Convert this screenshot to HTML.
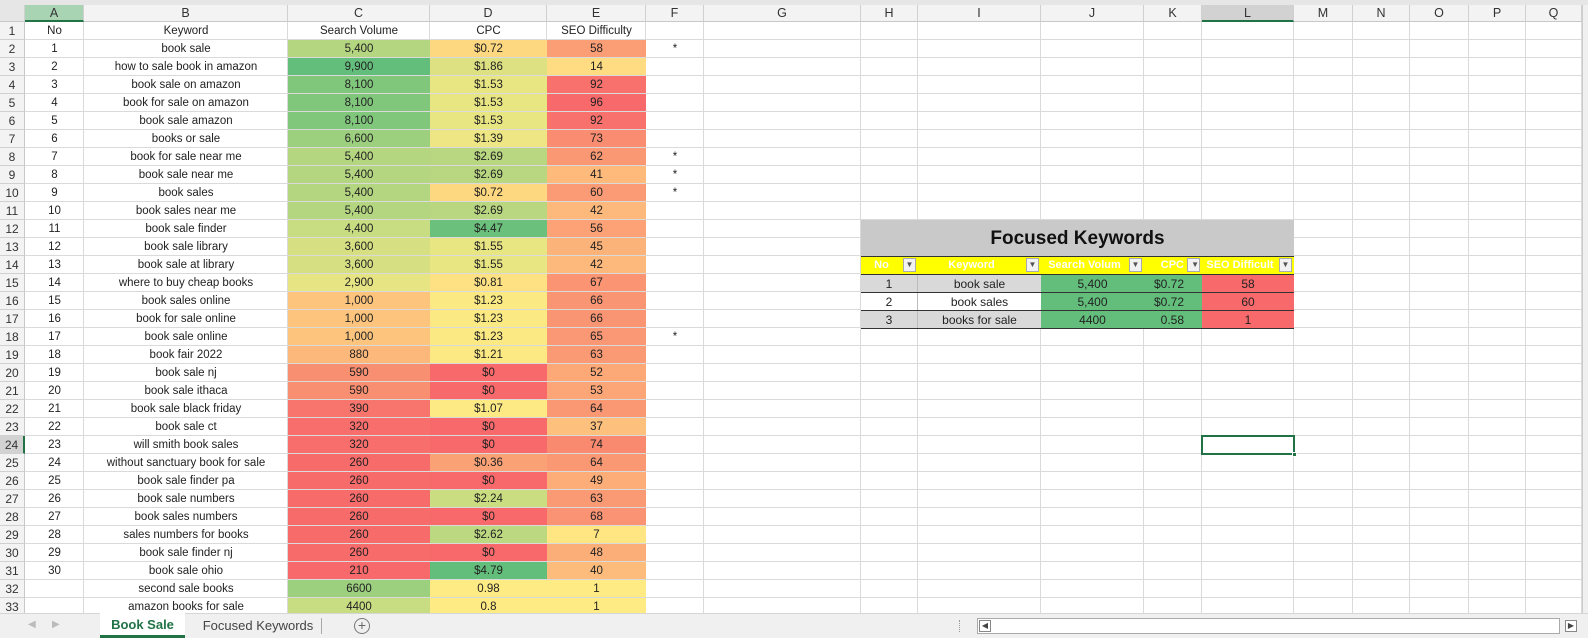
<!DOCTYPE html>
<html><head><meta charset="utf-8"><style>
*{box-sizing:border-box;margin:0;padding:0}
body{width:1588px;height:638px;overflow:hidden;background:#fff;font-family:"Liberation Sans",Arial,sans-serif;font-size:11.5px;color:#222;position:relative}
.top{position:absolute;left:0;top:0;width:1588px;height:5px;background:#e6e6e6}
.hdr{position:absolute;top:5px;height:17px;background:#f3f3f3;border-right:1px solid #d0d0d0;border-bottom:1px solid #c8c8c8;text-align:center;line-height:16px;font-size:12.5px;color:#333}
.vl{position:absolute;top:22px;height:592px;width:1px;background:#dadada}
.grid{position:absolute;left:25px;top:22px;width:1557px;height:592px;background:repeating-linear-gradient(to bottom,transparent 0,transparent 17px,#dadada 17px,#dadada 18px)}
.rn{position:absolute;left:0;width:25px;height:18px;background:#f3f3f3;border-bottom:1px solid #d0d0d0;border-right:1px solid #c8c8c8;font-size:12px;line-height:19px;text-align:center;color:#333}
.r{position:absolute;left:25px;height:18px;display:flex}
.r div{height:17px;line-height:19px;text-align:center;white-space:nowrap;overflow:hidden}
.a{width:59px}.b{width:204px}.c{width:142px}.d{width:117px}.e{width:99px}.f{width:58px}
.ft{position:absolute;left:861px;width:433px}
.tabs{position:absolute;left:0;top:613px;width:1588px;height:25px;background:#f0f0f0;border-top:1px solid #d6d6d6}
</style></head><body>
<div class="top"></div>
<div class="hdr" style="left:0;width:25px;background:#e6e6e6"></div>
<div class="hdr" style="left:25px;width:59px;background:#a9d4b4;border-bottom:2px solid #217346">A</div>
<div class="hdr" style="left:84px;width:204px">B</div>
<div class="hdr" style="left:288px;width:142px">C</div>
<div class="hdr" style="left:430px;width:117px">D</div>
<div class="hdr" style="left:547px;width:99px">E</div>
<div class="hdr" style="left:646px;width:58px">F</div>
<div class="hdr" style="left:704px;width:157px">G</div>
<div class="hdr" style="left:861px;width:57px">H</div>
<div class="hdr" style="left:918px;width:123px">I</div>
<div class="hdr" style="left:1041px;width:103px">J</div>
<div class="hdr" style="left:1144px;width:58px">K</div>
<div class="hdr" style="left:1202px;width:92px;background:#d2d2d2;border-bottom:2px solid #217346">L</div>
<div class="hdr" style="left:1294px;width:59px">M</div>
<div class="hdr" style="left:1353px;width:57px">N</div>
<div class="hdr" style="left:1410px;width:59px">O</div>
<div class="hdr" style="left:1469px;width:57px">P</div>
<div class="hdr" style="left:1526px;width:56px">Q</div>
<div style="position:absolute;left:1582px;top:5px;width:6px;height:608px;background:#f0f0f0;border-left:1px solid #ccc"></div>
<div class="grid"></div>
<div class="vl" style="left:83px"></div><div class="vl" style="left:287px"></div><div class="vl" style="left:429px"></div><div class="vl" style="left:546px"></div><div class="vl" style="left:645px"></div><div class="vl" style="left:703px"></div><div class="vl" style="left:860px"></div><div class="vl" style="left:917px"></div><div class="vl" style="left:1040px"></div><div class="vl" style="left:1143px"></div><div class="vl" style="left:1201px"></div><div class="vl" style="left:1293px"></div><div class="vl" style="left:1352px"></div><div class="vl" style="left:1409px"></div><div class="vl" style="left:1468px"></div><div class="vl" style="left:1525px"></div><div class="vl" style="left:1581px"></div>

<div class="rn" style="top:22px">1</div><div class="rn" style="top:40px">2</div><div class="rn" style="top:58px">3</div><div class="rn" style="top:76px">4</div><div class="rn" style="top:94px">5</div><div class="rn" style="top:112px">6</div><div class="rn" style="top:130px">7</div><div class="rn" style="top:148px">8</div><div class="rn" style="top:166px">9</div><div class="rn" style="top:184px">10</div><div class="rn" style="top:202px">11</div><div class="rn" style="top:220px">12</div><div class="rn" style="top:238px">13</div><div class="rn" style="top:256px">14</div><div class="rn" style="top:274px">15</div><div class="rn" style="top:292px">16</div><div class="rn" style="top:310px">17</div><div class="rn" style="top:328px">18</div><div class="rn" style="top:346px">19</div><div class="rn" style="top:364px">20</div><div class="rn" style="top:382px">21</div><div class="rn" style="top:400px">22</div><div class="rn" style="top:418px">23</div><div class="rn" style="top:436px;background:#d2d2d2;border-right:2px solid #217346">24</div><div class="rn" style="top:454px">25</div><div class="rn" style="top:472px">26</div><div class="rn" style="top:490px">27</div><div class="rn" style="top:508px">28</div><div class="rn" style="top:526px">29</div><div class="rn" style="top:544px">30</div><div class="rn" style="top:562px">31</div><div class="rn" style="top:580px">32</div><div class="rn" style="top:598px">33</div>

<div class="r" style="top:22px"><div class="a">No</div><div class="b">Keyword</div><div class="c">Search Volume</div><div class="d">CPC</div><div class="e">SEO Difficulty</div></div>
<div class="r" style="top:40px"><div class="a">1</div><div class="b">book sale</div><div class="c" style="background:#b5d680">5,400</div><div class="d" style="background:#fed880">$0.72</div><div class="e" style="background:#fb9d75">58</div><div class="f">*</div></div>
<div class="r" style="top:58px"><div class="a">2</div><div class="b">how to sale book in amazon</div><div class="c" style="background:#63be7b">9,900</div><div class="d" style="background:#dde182">$1.86</div><div class="e" style="background:#ffdb81">14</div></div>
<div class="r" style="top:76px"><div class="a">3</div><div class="b">book sale on amazon</div><div class="c" style="background:#80c77c">8,100</div><div class="d" style="background:#e8e583">$1.53</div><div class="e" style="background:#f8716c">92</div></div>
<div class="r" style="top:94px"><div class="a">4</div><div class="b">book for sale on amazon</div><div class="c" style="background:#80c77c">8,100</div><div class="d" style="background:#e8e583">$1.53</div><div class="e" style="background:#f8696b">96</div></div>
<div class="r" style="top:112px"><div class="a">5</div><div class="b">book sale amazon</div><div class="c" style="background:#80c77c">8,100</div><div class="d" style="background:#e8e583">$1.53</div><div class="e" style="background:#f8716c">92</div></div>
<div class="r" style="top:130px"><div class="a">6</div><div class="b">books or sale</div><div class="c" style="background:#9ccf7e">6,600</div><div class="d" style="background:#eee684">$1.39</div><div class="e" style="background:#fa8c71">73</div></div>
<div class="r" style="top:148px"><div class="a">7</div><div class="b">book for sale near me</div><div class="c" style="background:#b5d680">5,400</div><div class="d" style="background:#b9d780">$2.69</div><div class="e" style="background:#fa9874">62</div><div class="f">*</div></div>
<div class="r" style="top:166px"><div class="a">8</div><div class="b">book sale near me</div><div class="c" style="background:#b5d680">5,400</div><div class="d" style="background:#b9d780">$2.69</div><div class="e" style="background:#fdba7b">41</div><div class="f">*</div></div>
<div class="r" style="top:184px"><div class="a">9</div><div class="b">book sales</div><div class="c" style="background:#b5d680">5,400</div><div class="d" style="background:#fed880">$0.72</div><div class="e" style="background:#fb9b75">60</div><div class="f">*</div></div>
<div class="r" style="top:202px"><div class="a">10</div><div class="b">book sales near me</div><div class="c" style="background:#b5d680">5,400</div><div class="d" style="background:#b9d780">$2.69</div><div class="e" style="background:#fdb87b">42</div></div>
<div class="r" style="top:220px"><div class="a">11</div><div class="b">book sale finder</div><div class="c" style="background:#c8dc81">4,400</div><div class="d" style="background:#6bc07b">$4.47</div><div class="e" style="background:#fca276">56</div></div>
<div class="r" style="top:238px"><div class="a">12</div><div class="b">book sale library</div><div class="c" style="background:#d6e082">3,600</div><div class="d" style="background:#e8e583">$1.55</div><div class="e" style="background:#fcb379">45</div></div>
<div class="r" style="top:256px"><div class="a">13</div><div class="b">book sale at library</div><div class="c" style="background:#d6e082">3,600</div><div class="d" style="background:#e8e583">$1.55</div><div class="e" style="background:#fdb87b">42</div></div>
<div class="r" style="top:274px"><div class="a">14</div><div class="b">where to buy cheap books</div><div class="c" style="background:#e6e483">2,900</div><div class="d" style="background:#fee182">$0.81</div><div class="e" style="background:#fa9473">67</div></div>
<div class="r" style="top:292px"><div class="a">15</div><div class="b">book sales online</div><div class="c" style="background:#fdc47d">1,000</div><div class="d" style="background:#fbe983">$1.23</div><div class="e" style="background:#fa9573">66</div></div>
<div class="r" style="top:310px"><div class="a">16</div><div class="b">book for sale online</div><div class="c" style="background:#fdc47d">1,000</div><div class="d" style="background:#fbe983">$1.23</div><div class="e" style="background:#fa9573">66</div></div>
<div class="r" style="top:328px"><div class="a">17</div><div class="b">book sale online</div><div class="c" style="background:#fdc47d">1,000</div><div class="d" style="background:#fbe983">$1.23</div><div class="e" style="background:#fa9774">65</div><div class="f">*</div></div>
<div class="r" style="top:346px"><div class="a">18</div><div class="b">book fair 2022</div><div class="c" style="background:#fcb77a">880</div><div class="d" style="background:#fce983">$1.21</div><div class="e" style="background:#fa9a74">63</div></div>
<div class="r" style="top:364px"><div class="a">19</div><div class="b">book sale nj</div><div class="c" style="background:#f98f71">590</div><div class="d" style="background:#f8696b">$0</div><div class="e" style="background:#fca877">52</div></div>
<div class="r" style="top:382px"><div class="a">20</div><div class="b">book sale ithaca</div><div class="c" style="background:#f98f71">590</div><div class="d" style="background:#f8696b">$0</div><div class="e" style="background:#fca677">53</div></div>
<div class="r" style="top:400px"><div class="a">21</div><div class="b">book sale black friday</div><div class="c" style="background:#f8756d">390</div><div class="d" style="background:#feea84">$1.07</div><div class="e" style="background:#fa9874">64</div></div>
<div class="r" style="top:418px"><div class="a">22</div><div class="b">book sale ct</div><div class="c" style="background:#f86e6c">320</div><div class="d" style="background:#f8696b">$0</div><div class="e" style="background:#fdc07d">37</div></div>
<div class="r" style="top:436px"><div class="a">23</div><div class="b">will smith book sales</div><div class="c" style="background:#f86e6c">320</div><div class="d" style="background:#f8696b">$0</div><div class="e" style="background:#f98a70">74</div></div>
<div class="r" style="top:454px"><div class="a">24</div><div class="b">without sanctuary book for sale</div><div class="c" style="background:#f86b6b">260</div><div class="d" style="background:#fba176">$0.36</div><div class="e" style="background:#fa9874">64</div></div>
<div class="r" style="top:472px"><div class="a">25</div><div class="b">book sale finder pa</div><div class="c" style="background:#f86b6b">260</div><div class="d" style="background:#f8696b">$0</div><div class="e" style="background:#fcad78">49</div></div>
<div class="r" style="top:490px"><div class="a">26</div><div class="b">book sale numbers</div><div class="c" style="background:#f86b6b">260</div><div class="d" style="background:#cbdd81">$2.24</div><div class="e" style="background:#fa9a74">63</div></div>
<div class="r" style="top:508px"><div class="a">27</div><div class="b">book sales numbers</div><div class="c" style="background:#f86b6b">260</div><div class="d" style="background:#f8696b">$0</div><div class="e" style="background:#fa9373">68</div></div>
<div class="r" style="top:526px"><div class="a">28</div><div class="b">sales numbers for books</div><div class="c" style="background:#f86b6b">260</div><div class="d" style="background:#bcd880">$2.62</div><div class="e" style="background:#ffe683">7</div></div>
<div class="r" style="top:544px"><div class="a">29</div><div class="b">book sale finder nj</div><div class="c" style="background:#f86b6b">260</div><div class="d" style="background:#f8696b">$0</div><div class="e" style="background:#fcae78">48</div></div>
<div class="r" style="top:562px"><div class="a">30</div><div class="b">book sale ohio</div><div class="c" style="background:#f8696b">210</div><div class="d" style="background:#63be7b">$4.79</div><div class="e" style="background:#fdbc7c">40</div></div>
<div class="r" style="top:580px"><div class="a"></div><div class="b">second sale books</div><div class="c" style="background:#9ccf7e">6600</div><div class="d" style="background:#ffeb84">0.98</div><div class="e" style="background:#ffeb84">1</div></div>
<div class="r" style="top:598px"><div class="a"></div><div class="b">amazon books for sale</div><div class="c" style="background:#c8dc81">4400</div><div class="d" style="background:#ffeb84">0.8</div><div class="e" style="background:#ffeb84">1</div></div>

<div class="ft" style="top:220px;height:37px;background:#c9c9c9;text-align:center;font-weight:bold;font-size:19px;line-height:38px;color:#111;border-bottom:1px solid #333">Focused Keywords</div>
<div class="ft" style="top:257px;height:18px;background:#ffff00;display:flex;color:#fff;font-weight:bold;font-size:11px;line-height:17px;border-bottom:1px solid #333">
<div style="width:57px;position:relative;text-align:center;padding-right:16px">No<span style="position:absolute;right:2px;top:1px;width:13px;height:14px;background:#f2f2f2;border:1px solid #aaa;color:#555;font-size:8px;line-height:12px">▼</span></div>
<div style="width:123px;position:relative;text-align:center;padding-right:16px">Keyword<span style="position:absolute;right:2px;top:1px;width:13px;height:14px;background:#f2f2f2;border:1px solid #aaa;color:#555;font-size:8px;line-height:12px">▼</span></div>
<div style="width:103px;position:relative;text-align:center;padding-right:16px;overflow:hidden;white-space:nowrap">Search Volum<span style="position:absolute;right:2px;top:1px;width:13px;height:14px;background:#f2f2f2;border:1px solid #aaa;color:#555;font-size:8px;line-height:12px">▼</span></div>
<div style="width:58px;position:relative;text-align:right;padding-right:18px">CPC<span style="position:absolute;right:2px;top:1px;width:13px;height:14px;background:#f2f2f2;border:1px solid #aaa;color:#555;font-size:8px;line-height:12px">▼</span></div>
<div style="width:92px;position:relative;text-align:center;padding-right:16px;overflow:hidden;white-space:nowrap">SEO Difficult<span style="position:absolute;right:2px;top:1px;width:13px;height:14px;background:#f2f2f2;border:1px solid #aaa;color:#555;font-size:8px;line-height:12px">▼</span></div>
</div>
<div class="ft" style="top:275px;height:18px;display:flex;line-height:18px;border-bottom:1px solid #333;font-size:12px">
<div style="width:57px;background:#d9d9d9;text-align:center;border-right:1px solid #bbb">1</div><div style="width:123px;background:#d9d9d9;text-align:center">book sale</div><div style="width:103px;background:#63be7b;text-align:center">5,400</div><div style="width:58px;background:#63be7b;text-align:right;padding-right:18px">$0.72</div><div style="width:92px;background:#f8696b;text-align:center">58</div></div>
<div class="ft" style="top:293px;height:18px;display:flex;line-height:18px;border-bottom:1px solid #333;font-size:12px">
<div style="width:57px;background:#fff;text-align:center;border-right:1px solid #bbb">2</div><div style="width:123px;background:#fff;text-align:center">book sales</div><div style="width:103px;background:#63be7b;text-align:center">5,400</div><div style="width:58px;background:#63be7b;text-align:right;padding-right:18px">$0.72</div><div style="width:92px;background:#f8696b;text-align:center">60</div></div>
<div class="ft" style="top:311px;height:18px;display:flex;line-height:18px;border-bottom:1px solid #333;font-size:12px">
<div style="width:57px;background:#d9d9d9;text-align:center;border-right:1px solid #bbb">3</div><div style="width:123px;background:#d9d9d9;text-align:center">books for sale</div><div style="width:103px;background:#63be7b;text-align:center">4400</div><div style="width:58px;background:#63be7b;text-align:right;padding-right:18px">0.58</div><div style="width:92px;background:#f8696b;text-align:center">1</div></div>

<div style="position:absolute;left:1201px;top:435px;width:94px;height:20px;border:2px solid #217346"></div>
<div style="position:absolute;left:1292px;top:452px;width:5px;height:5px;background:#217346;border:1px solid #fff"></div>

<div class="tabs">
<span style="position:absolute;left:28px;top:5px;color:#bbb;font-size:10px">◀</span>
<span style="position:absolute;left:52px;top:5px;color:#bbb;font-size:10px">▶</span>
<div style="position:absolute;left:100px;top:-1px;width:85px;height:25px;background:#fff;border-bottom:3px solid #217346;color:#217346;font-weight:bold;font-size:13px;text-align:center;line-height:23px">Book Sale</div>
<div style="position:absolute;left:195px;top:0;width:126px;font-size:13px;color:#444;line-height:23px;text-align:center">Focused Keywords</div>
<div style="position:absolute;left:321px;top:4px;width:1px;height:16px;background:#aaa"></div>
<div style="position:absolute;left:354px;top:4px;width:16px;height:16px;border:1px solid #777;border-radius:50%;text-align:center;line-height:13px;color:#666;font-size:14px">+</div>
<div style="position:absolute;left:959px;top:6px;width:1px;height:12px;border-left:1px dotted #999"></div>
<div style="position:absolute;left:977px;top:4px;width:583px;height:16px;background:#fff;border:1px solid #aaa"></div>
<div style="position:absolute;left:979px;top:6px;width:12px;height:12px;border:1px solid #888;background:#fff;font-size:8px;line-height:10px;text-align:center;color:#444">◀</div>
<div style="position:absolute;left:1565px;top:6px;width:12px;height:12px;border:1px solid #888;background:#fff;font-size:8px;line-height:10px;text-align:center;color:#444">▶</div>
</div>
</body></html>
